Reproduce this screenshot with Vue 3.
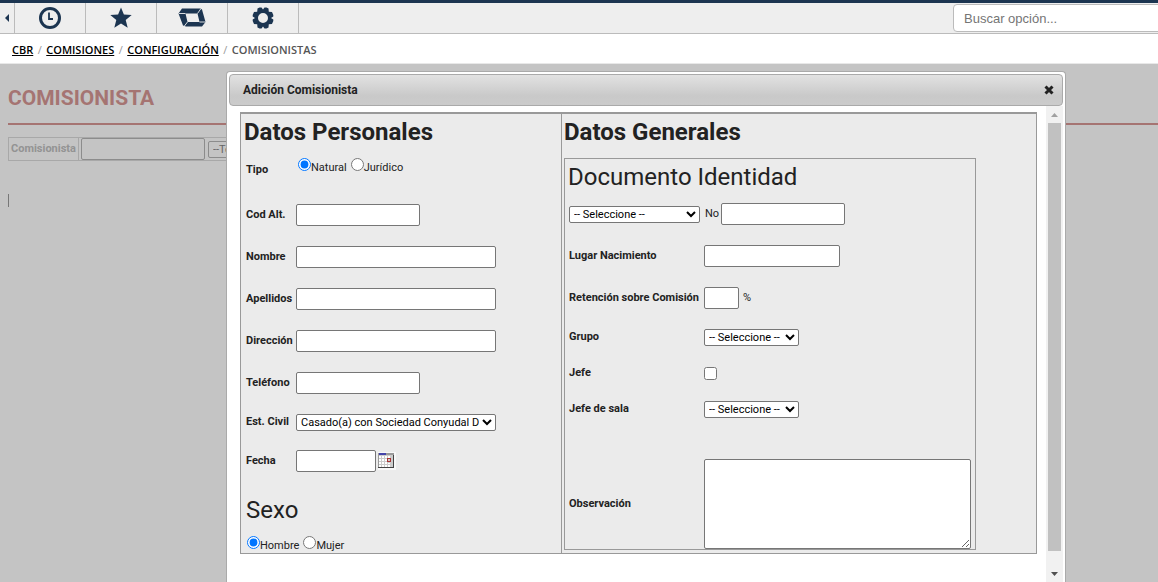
<script setup>
import { ref } from 'vue'

const personales = [
  { id: 'cod', label: 'Cod Alt.', size: 'mid' },
  { id: 'nombre', label: 'Nombre', size: 'wide' },
  { id: 'apellidos', label: 'Apellidos', size: 'wide' },
  { id: 'direccion', label: 'Dirección', size: 'wide' },
  { id: 'telefono', label: 'Teléfono', size: 'mid' },
]
const tipo = ref('natural')
const sexo = ref('hombre')
</script>

<template>
  <div class="page">
    <header class="toolbar">
      <button class="tool collapse" aria-label="Contraer">
        <svg width="4" height="8" viewBox="0 0 4 8"><path d="M4 0v8L0 4z" /></svg>
      </button>
      <button class="tool" aria-label="Recientes">
        <svg width="22" height="22" viewBox="0 0 22 22">
          <circle cx="11" cy="11" r="9.5" fill="none" stroke="#1c3551" stroke-width="3" />
          <path d="M10 5.500v6.500h4" fill="none" stroke="#1c3551" stroke-width="1.800" />
        </svg>
      </button>
      <button class="tool" aria-label="Favoritos">
        <svg width="22" height="22" viewBox="0 0 22 22">
          <path d="M11 .4l2.900 7.200 7.800.5-6 5 2 7.700L11 16.600l-6.700 4.200 2-7.700-6-5 7.800-.5z" />
        </svg>
      </button>
      <button class="tool" aria-label="Módulos">
        <svg width="28" height="20" viewBox="0 0 28 20">
          <path fill-rule="evenodd" d="M4 .5h18.500l1.500 1 3.500 12.500-3.500 4.500H8L5 17.500 .5 5.500zM7.500 5.500l2 8.500h12l-2-8.500z" />
          <path d="M1 5.500h6.500M23 .5L19.500 5.500M27.500 14h-6M9.500 14L6 18.500" fill="none" stroke="#eee" stroke-width=".9" />
        </svg>
      </button>
      <button class="tool" aria-label="Configuración">
        <svg width="22" height="22" viewBox="0 0 22 22">
          <path fill-rule="evenodd" d="M7.500.5h2l1.500 2 1.500-2h2l2 1 .3 3.200 3.200.3 1.300 3v1.500L19 11l2.300 1.500V14L20 17l-3.200.3-.3 3.200-2 1h-2l-1.500-2-1.500 2h-2l-2-1-.3-3.200L2 17 .7 14v-1.500L3 11 .7 9.500V8L2 5l3.200-.3.3-3.200zM11 6a5 5 0 100 10 5 5 0 000-10z" />
        </svg>
      </button>
      <input class="search" type="text" placeholder="Buscar opción..." aria-label="Buscar opción" />
    </header>

    <nav class="crumbs">
      <a href="#">CBR</a><i>/</i><a href="#">COMISIONES</a><i>/</i><a href="#">CONFIGURACIÓN</a><i>/</i><span>COMISIONISTAS</span>
    </nav>

    <main class="stage">
      <h1>COMISIONISTA</h1>
      <div class="filter">
        <label for="filtro">Comisionista</label>
        <input id="filtro" type="text" />
        <select aria-label="Filtro"><option>--Todos--</option></select>
      </div>
      <div class="caret"></div>

      <section class="dialog" role="dialog" aria-labelledby="dlg-title">
        <div class="titlebar">
          <span id="dlg-title">Adición Comisionista</span>
          <button class="close" aria-label="Cerrar">
            <svg width="10" height="10" viewBox="0 0 10 10"><path d="M1.500 1.500l7 7M8.500 1.500l-7 7" fill="none" stroke="#222" stroke-width="3" /></svg>
          </button>
        </div>
        <div class="body">
          <form class="panel">
            <div class="left">
              <h2>Datos Personales</h2>
              <div class="row tipo">
                <span class="lab">Tipo</span>
                <div class="radios">
                  <input id="nat" v-model="tipo" type="radio" value="natural" /><label for="nat">Natural</label>
                  <input id="jur" v-model="tipo" type="radio" value="juridico" /><label for="jur">Jurídico</label>
                </div>
              </div>
              <div v-for="f in personales" :key="f.id" class="row">
                <label class="lab" :for="f.id">{{ f.label }}</label>
                <input :id="f.id" type="text" :class="f.size" />
              </div>
              <div class="row short">
                <label class="lab" for="civil">Est. Civil</label>
                <select id="civil" class="wide"><option>Casado(a) con Sociedad Conyudal Disuelta</option></select>
              </div>
              <div class="row">
                <label class="lab" for="fecha">Fecha</label>
                <input id="fecha" type="text" class="date" />
                <button type="button" class="cal" aria-label="Calendario">
                  <svg width="18" height="18" viewBox="0 0 18 18" shape-rendering="crispEdges">
                    <path fill="#f8f8f8" d="M0 0h18v18H0z" />
                    <path fill="#ccc" d="M0 3h15v12H0z" />
                    <path fill="#fff" d="M1 4h2v2H1zM4 4h2v2H4zM7 4h2v2H7zM10 4h2v2h-2zM1 7h2v2H1zM4 7h2v2H4zM7 7h2v2H7zM1 10h2v2H1zM4 10h2v2H4zM7 10h2v2H7zM10 11h2v1h-2zM1 13h2v2H1zM4 13h2v2H4zM7 13h2v2H7zM10 13h2v2h-2z" />
                    <path fill="#44a" d="M1 1h7v2H1z" /><path fill="#999" d="M8 1h8v2H8z" />
                    <path fill="#444" d="M15 3h1v13H0v-1h15z" /><path fill="#999" d="M0 1h1v14H0z" />
                    <path fill="none" stroke="#a33" d="M9.500 6.500h3v3h-3z" />
                  </svg>
                </button>
              </div>
              <h3>Sexo</h3>
              <div class="radios sexo">
                <input id="hom" v-model="sexo" type="radio" value="hombre" /><label for="hom">Hombre</label>
                <input id="muj" v-model="sexo" type="radio" value="mujer" /><label for="muj">Mujer</label>
              </div>
            </div>

            <div class="right">
              <h2>Datos Generales</h2>
              <div class="inner">
                <h3>Documento Identidad</h3>
                <div class="row">
                  <select class="doc" aria-label="Tipo de documento"><option>-- Seleccione --</option></select>
                  <label class="no" for="num">No</label>
                  <input id="num" type="text" class="mid" />
                </div>
                <div class="row">
                  <label class="lab" for="lugar">Lugar Nacimiento</label>
                  <input id="lugar" type="text" class="place" />
                </div>
                <div class="row">
                  <label class="lab" for="ret">Retención sobre Comisión</label>
                  <input id="ret" type="text" class="pct" /><span class="unit">%</span>
                </div>
                <div class="row short">
                  <label class="lab" for="grupo">Grupo</label>
                  <select id="grupo" class="pick"><option>-- Seleccione --</option></select>
                </div>
                <div class="row short">
                  <label class="lab" for="jefe">Jefe</label>
                  <input id="jefe" type="checkbox" />
                </div>
                <div class="row short">
                  <label class="lab" for="sala">Jefe de sala</label>
                  <select id="sala" class="pick"><option>-- Seleccione --</option></select>
                </div>
                <div class="row obs">
                  <label class="lab" for="obs">Observación</label>
                  <textarea id="obs"></textarea>
                </div>
              </div>
            </div>
          </form>
          <div class="scroll" aria-hidden="true">
            <svg width="7" height="4" viewBox="0 0 7 4"><path fill="#a0a0a0" d="M3.500 0L7 4H0z" /></svg>
            <div class="thumb"></div>
            <svg width="7" height="4" viewBox="0 0 7 4"><path fill="#505050" d="M3.500 4L7 0H0z" /></svg>
          </div>
        </div>
      </section>
    </main>
  </div>
</template>

<style>
body { margin: 0; }
</style>

<style scoped>
* { box-sizing: border-box; }
.page {
  display: flex;
  flex-direction: column;
  height: 100vh;
  overflow: hidden;
  background: #fff;
  color: #222;
  font: 11px/16px Roboto, sans-serif;
}
button { padding: 0; border: 0; background: none; font: inherit; }
svg { display: block; fill: #1c3551; }
h1, h2, h3 { margin: 0; }

.toolbar {
  display: flex;
  flex: none;
  height: 34px;
  border-top: 3px solid #1c3551;
  border-bottom: 1px solid #bbb;
  background: #eee;
}
.tool {
  display: flex;
  align-items: center;
  justify-content: center;
  width: 71px;
  border-right: 1px solid #bbb;
}
.collapse { width: 15px; }

.crumbs {
  display: flex;
  flex: none;
  align-items: center;
  height: 30px;
  padding: 2px 12px 0;
  border-bottom: 1px solid #e8e8e8;
  font: 600 11px/16px "Open Sans", sans-serif;
}
.crumbs a { color: #000; }
.crumbs span { color: #555; }
.crumbs i { width: 13px; color: #999; font-style: normal; font-weight: 400; text-align: center; }

.stage {
  position: relative;
  flex: 1;
  min-height: 0;
  padding: 18px 0 0 8px;
  background: #c4c4c4;
}
h1 {
  height: 43px;
  border-bottom: 2px solid #a57472;
  color: #a57472;
  font: 700 21px/32px Roboto, sans-serif;
}
.filter {
  display: flex;
  align-items: center;
  width: 60%;
  height: 24px;
  margin-top: 12px;
  border: 1px solid #a8a8a8;
  color: #939393;
}
.filter label { width: 70px; padding-left: 2px; height: 22px; line-height: 21px; border-right: 1px solid #a8a8a8; font-weight: 700; }
.caret { width: 1px; height: 13px; margin-top: 33px; background: #777; }

.dialog {
  position: absolute;
  top: 7px;
  right: 92px;
  bottom: 0;
  left: 226px;
  display: flex;
  flex-direction: column;
  padding: 2px 2px 0;
  border: 1px solid #aaa;
  border-bottom: 0;
  border-radius: 4px 4px 0 0;
  background: #fff;
}
.titlebar {
  display: flex;
  align-items: center;
  justify-content: space-between;
  flex: none;
  height: 32px;
  padding: 0 8px 0 13px;
  border: 1px solid #aaa;
  border-radius: 4px;
  background: linear-gradient(#e2e2e2, #c9c9c9 70%, #cbcbcb);
  font-size: 12px;
  font-weight: 700;
}
.body { display: flex; flex: 1; min-height: 0; }
.panel {
  display: flex;
  flex: 1;
  align-self: flex-start;
  margin: 6px 9px 0 11px;
  border: 1px solid #999;
  border-top-width: 2px;
  background: #ebebeb;
}
.left { width: 321px; border-right: 1px solid #999; padding: 0 3px 0 5px; }
.right { flex: 1; padding: 0 60px 2px 2px; }
h2 { height: 36px; font: 700 24px/36px Roboto, sans-serif; }
.left h2 { margin-left: -2px; }
.right h2 { height: 44px; }
h3 { font: 400 24px/36px Roboto, sans-serif; }
.left h3 { padding: 10px 0 4px; }

.row { display: flex; align-items: center; height: 42px; }
.short { height: 36px; }
.tipo { height: 44px; padding-bottom: 4px; }
.lab { width: 50px; font-weight: 700; white-space: nowrap; }
.inner .lab { width: 135px; }
.inner { border: 1px solid #999; padding-left: 4px; }
.inner h3 { height: 34px; margin-left: -1px; }
.unit { margin-left: 4px; }
.no { margin: 0 2px 0 5px; }

input[type="text"], textarea, select {
  border: 1px solid #767676;
  border-radius: 2px;
  background: #fff;
  font: 11px/15px Roboto, sans-serif;
}
input[type="text"] { height: 22px; }
input[type="text"].search {
  width: 210px;
  height: 28px;
  margin: 1px -5px 0 auto;
  padding: 0 10px;
  border-color: #bbb;
  border-radius: 4px;
  font: 13px/20px "Liberation Sans", Arial, sans-serif;
}
.search::placeholder { color: #757575; }
select { height: 17px; padding: 0; color: #000; }
.filter input[type="text"], .filter select { margin-left: 2px; border-color: #8c8c8c; background: #c4c4c4; }
.filter input[type="text"] { width: 124px; }
.filter select { width: 90px; margin-left: 3px; color: #666; }
.mid { width: 124px; }
.wide { width: 200px; }
.date { width: 80px; }
.place { width: 136px; }
.pct { width: 35px; }
.pick { width: 95px; }
.doc { width: 131px; }
.cal { margin-left: 2px; }
input[type="radio"], input[type="checkbox"] { width: 13px; height: 13px; margin: 0; }
.radios { display: flex; align-items: flex-start; height: 24px; padding-left: 2px; }
.radios label { padding-top: 2px; }
.radios label + input { margin-left: 4px; }
.sexo { height: 21px; padding: 4px 0 0 1px; }
.obs { height: 122px; align-items: flex-end; }
.obs .lab { line-height: 90px; }
textarea { width: 267px; height: 90px; resize: both; }

.scroll {
  display: flex;
  flex: none;
  flex-direction: column;
  align-items: center;
  width: 17px;
  padding: 7px 0 6px;
  background: #f1f1f1;
}
.thumb { flex: 1; width: 13px; margin: 6px 0 21px; background: #c1c1c1; }
</style>
